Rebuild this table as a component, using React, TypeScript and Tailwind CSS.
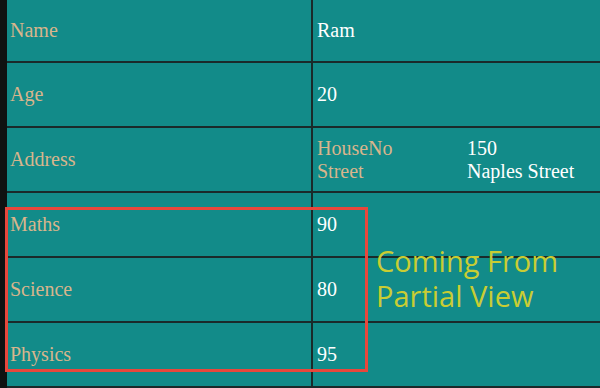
const rows: { label: string; value?: string }[] = [
  { label: 'Name', value: 'Ram' },
  { label: 'Age', value: '20' },
  { label: 'Address' },
  { label: 'Maths', value: '90' },
  { label: 'Science', value: '80' },
  { label: 'Physics', value: '95' },
];

function AddressTable() {
  return (
    <table className="border-collapse">
      <tbody>
        <tr>
          <td className="w-[150px] p-0 text-[#d9b58c]">HouseNo</td>
          <td className="p-0 text-white">150</td>
        </tr>
        <tr>
          <td className="w-[150px] p-0 text-[#d9b58c]">Street</td>
          <td className="p-0 text-white">Naples Street</td>
        </tr>
      </tbody>
    </table>
  );
}

export default function App() {
  return (
    <div className="relative flex h-[388px] w-[600px] overflow-hidden bg-[#128b89] font-['Liberation_Serif',serif] text-[20px] leading-[23px]">
      <div className="w-[7px] shrink-0 bg-[#0f1211]" />
      <div className="flex flex-1 flex-col">
        {rows.map((row, i) => (
          <div
            key={row.label}
            className={`flex border-b-2 border-[#1a2a2a] ${i === 0 ? 'h-[63px]' : 'h-[65px]'}`}
          >
            <div className="flex w-[304px] shrink-0 items-center pl-[3px] text-[#d9b58c]">
              {row.label}
            </div>
            <div className="w-[2px] shrink-0 bg-[#1a2a2a]" />
            <div className="flex flex-1 items-center pl-[4px] text-white">
              {row.value ?? <AddressTable />}
            </div>
          </div>
        ))}
      </div>

      {/* annotation overlay */}
      <div className="pointer-events-none absolute left-[5px] top-[207px] h-[165px] w-[363px] border-[3px] border-[#e8473b]" />
      <div className="pointer-events-none absolute left-[376px] top-[243px] font-['Open_Sans',sans-serif] text-[29px] leading-[35px] text-[#c9cd33]">
        Coming From
        <br />
        Partial View
      </div>
    </div>
  );
}
